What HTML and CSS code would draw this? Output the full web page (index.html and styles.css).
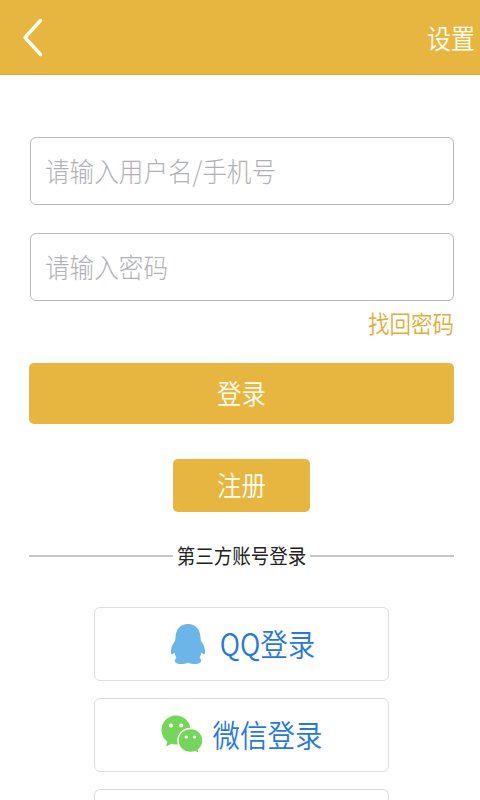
FILE: index.html
```html
<!DOCTYPE html>
<html lang="zh-CN">
<head>
    <meta charset="UTF-8">
    <meta name="viewport" content="width=device-width, initial-scale=1.0">
    <title>登录</title>
    <link rel="stylesheet" href="styles.css">
</head>
<body>
    <header class="header">
        <a href="#" class="back">
            <svg width="22" height="42" viewBox="0 0 22 42">
                <path d="M18.5 3.5 L3 20.5 L18.5 37.5" fill="none" stroke="#fffdf0" stroke-width="3.4" stroke-linecap="round" stroke-linejoin="round"/>
            </svg>
        </a>
        <a href="#" class="settings"><span class="tall">设置</span></a>
    </header>

    <form class="login-form">
        <div class="field">
            <input type="text" class="tall" placeholder="请输入用户名/手机号">
        </div>
        <div class="field">
            <input type="password" class="tall" placeholder="请输入密码">
        </div>
        <a href="#" class="forgot"><span class="tall">找回密码</span></a>
        <button type="button" class="btn login-btn"><span class="tall">登录</span></button>
        <button type="button" class="btn register-btn"><span class="tall">注册</span></button>
    </form>

    <div class="divider"><span class="tall">第三方账号登录</span></div>

    <div class="third-party">
        <a href="#" class="third-btn qq">
            <svg width="36" height="42" viewBox="0 0 36 42">
                <path d="M18 1 C10 1 5.5 7 5.5 15 L5 18 C2.5 21 0.5 26 1 29.5 C1.2 32 2.5 31.5 4.6 29.5 C5 31.5 5.6 33.5 6.5 35 C3.5 37 4.5 41 10 41 C14 41 16 40.4 18 39.4 C20 40.4 22 41 26 41 C31.5 41 32.5 37 29.5 35 C30.4 33.5 31 31.5 31.4 29.5 C33.5 31.5 34.8 32 35 29.5 C35.5 26 33.5 21 31 18 L30.5 15 C30.5 7 26 1 18 1 Z" fill="#6cb5e9"/>
            </svg>
            <span class="tall">QQ登录</span>
        </a>
        <a href="#" class="third-btn wechat">
            <svg width="42" height="40" viewBox="0 0 42 40">
                <path d="M15 0.5 C6.8 0.5 0.5 7 0.5 15 C0.5 20 3 24 6.4 26.8 L5 31.5 L10.5 28.8 C12 29.3 13.5 29.5 15 29.5 C23 29.5 29.5 23 29.5 15 C29.5 7 23 0.5 15 0.5 Z" fill="#76d65b"/>
                <circle cx="10" cy="10.5" r="2" fill="#fff"/>
                <circle cx="20.3" cy="10.5" r="2" fill="#fff"/>
                <path d="M29.5 13.5 C22.5 13.5 17 18.7 17 25.5 C17 32.3 22.5 37.5 29.5 37.5 C31.3 37.5 33 37.2 34.5 36.5 L38 39 L37.5 34.8 C40.3 32.5 42 29.3 42 25.5 C42 18.7 36.5 13.5 29.5 13.5 Z" fill="#76d65b" stroke="#fff" stroke-width="1.4"/>
                <circle cx="25.3" cy="22" r="1.6" fill="#fff"/>
                <circle cx="33.5" cy="22" r="1.6" fill="#fff"/>
            </svg>
            <span class="tall">微信登录</span>
        </a>
        <a href="#" class="third-btn"></a>
    </div>
</body>
</html>
```
FILE: styles.css
```css
* {
    margin: 0;
    padding: 0;
    box-sizing: border-box;
    font-family: "Noto Sans CJK SC", sans-serif;
}

body {
    display: flex;
    flex-direction: column;
    height: 100vh;
    overflow: hidden;
    background-color: #fff;
    font-weight: 350;
}

a {
    text-decoration: none;
}

svg {
    display: block;
}

.tall {
    display: inline-block;
    transform: translateY(-1.5px) scaleY(1.12);
}

.header {
    display: flex;
    flex: none;
    justify-content: space-between;
    align-items: center;
    height: 75px;
    padding: 1px 5px 0 22px;
    background-color: #e7b640;
    border-bottom: 1px solid #dca93a;
}

.settings {
    color: #fffdf0;
    font-size: 24px;
    line-height: 38px;
    padding-top: 3px;
}

.login-form {
    display: flex;
    flex: none;
    flex-direction: column;
    padding: 62px 26px 0 29px;
}

.field {
    height: 68px;
    margin: 0 0 28px 1px;
    padding: 0 14px 1px;
    border: 1.5px solid #b9b9bb;
    border-radius: 6px;
    display: flex;
    align-items: center;
}

.field input {
    width: 100%;
    height: 40px;
    border: none;
    outline: none;
    background: transparent;
    font-size: 24.6px;
    font-weight: 300;
}

.field input::placeholder {
    color: #b0b0b6;
}

.forgot {
    align-self: flex-end;
    margin-top: -21px;
    color: #e0ad38;
    font-size: 21.5px;
    line-height: 32px;
}

.btn {
    border: none;
    border-radius: 5px;
    background-color: #e7b640;
    color: #fffdf0;
    font-size: 24.4px;
    font-weight: 350;
    line-height: 36px;
}

.login-btn {
    height: 61px;
    margin-top: 23px;
}

.register-btn {
    align-self: center;
    width: 137px;
    height: 53px;
    margin-top: 35px;
}

.divider {
    display: flex;
    flex: none;
    align-items: center;
    gap: 4px;
    height: 30px;
    margin: 29px 26px 0 29px;
    color: #222;
    font-size: 18.5px;
    font-weight: 400;
    white-space: nowrap;
}

.divider .tall {
    transform: translateY(-0.5px) scaleY(1.12);
}

.divider::before,
.divider::after {
    content: "";
    flex: 1;
    height: 2px;
    background-color: #c5c5c5;
}

.third-party {
    display: flex;
    flex: 1;
    flex-direction: column;
    gap: 17px;
    width: 295px;
    min-height: 0;
    margin: 36px 0 0 94px;
    overflow: hidden;
}

.third-btn {
    display: flex;
    justify-content: center;
    align-items: center;
    flex: none;
    height: 74px;
    border: 1.5px solid #dcdcde;
    border-radius: 6px;
    color: #2878da;
    font-size: 27.5px;
    line-height: 40px;
}

/* last button runs under the bottom edge of the screen */
.third-btn:last-child {
    flex: 1;
    height: auto;
    border-bottom: none;
    border-radius: 6px 6px 0 0;
}

.qq {
    gap: 14px;
    padding-left: 2px;
}

.wechat {
    gap: 10px;
}
```
